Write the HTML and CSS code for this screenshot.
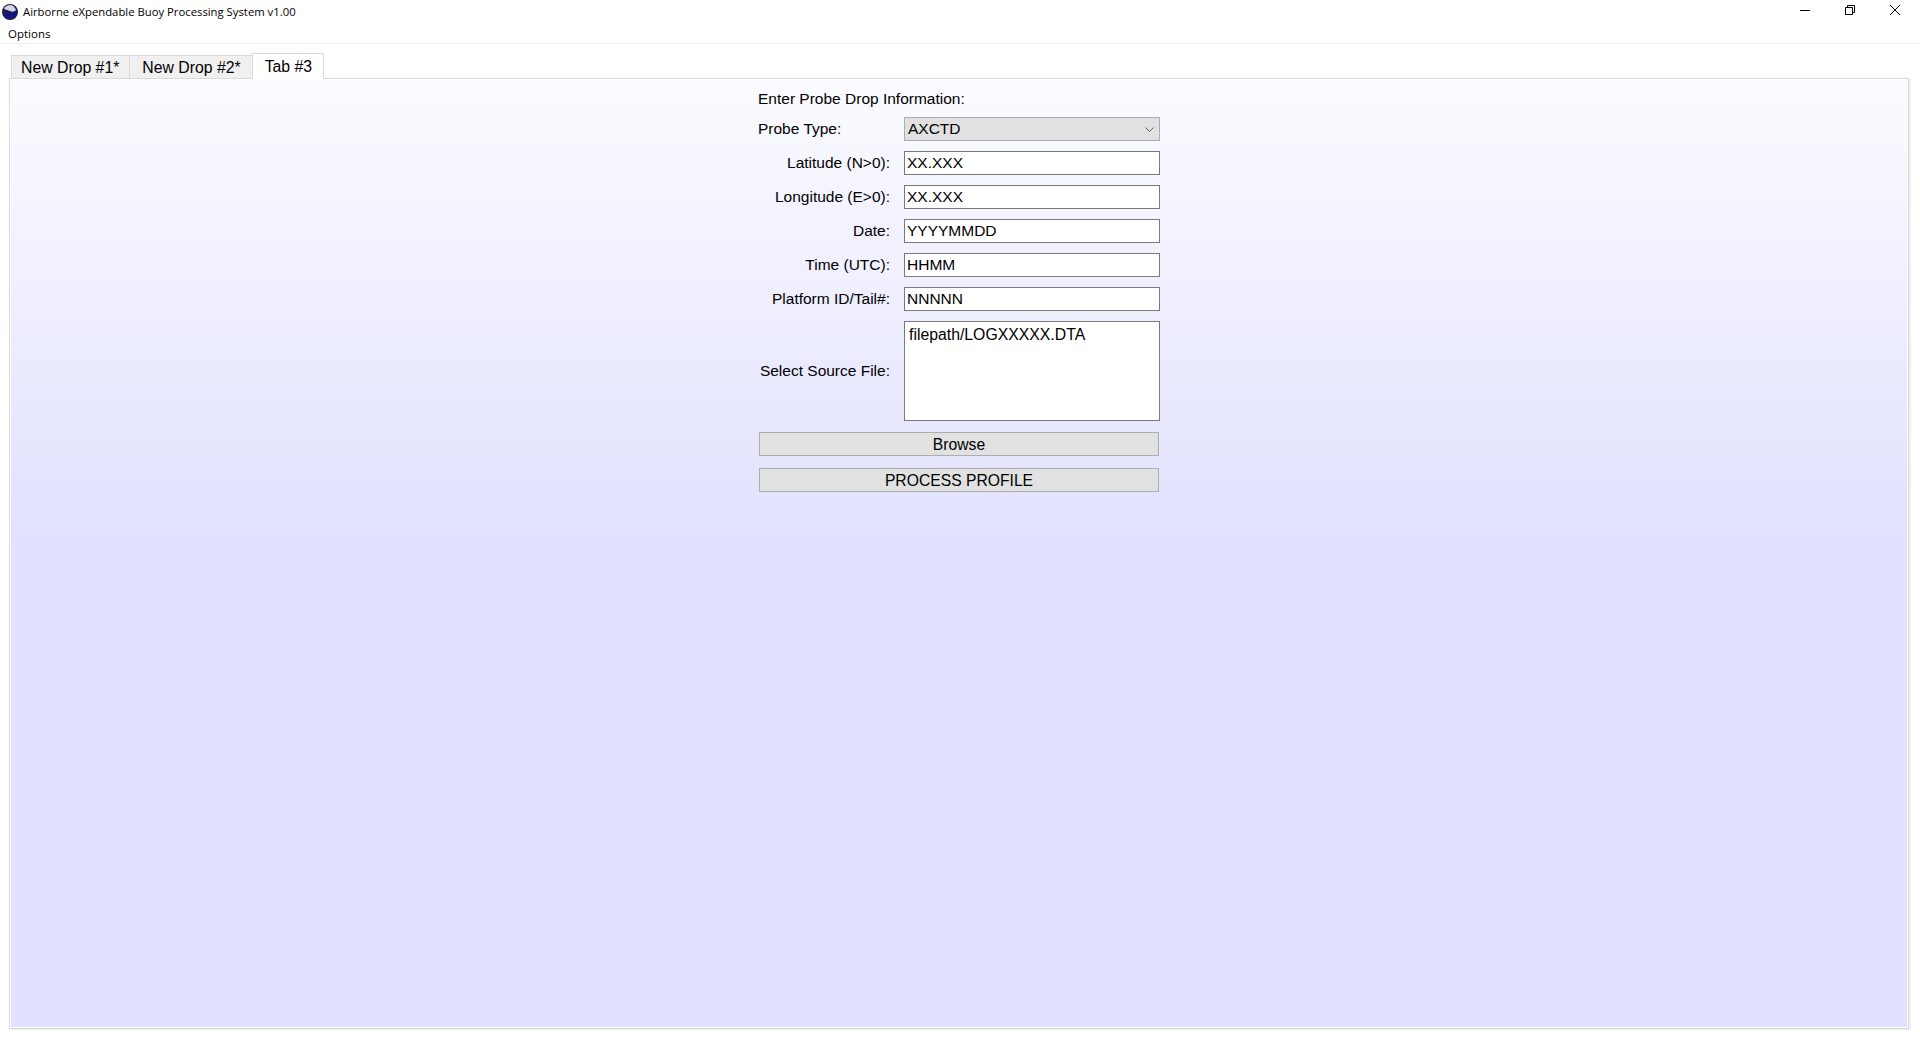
FILE: index.html
```html
<!DOCTYPE html>
<html lang="en">
<head>
    <meta charset="UTF-8">
    <title>Airborne eXpendable Buoy Processing System v1.00</title>
    <link rel="stylesheet" href="styles.css">
</head>
<body>
    <!-- window title bar -->
    <div class="titlebar">
        <svg class="app-icon" width="16" height="16" viewBox="0 0 16 16">
            <circle cx="8" cy="8" r="8" fill="#1c1c4e"/>
            <path d="M2 5 C3 2 6 1 8 1 C11 1 13 3 14 6 C12 8 10 8 8 7 C6 6 4 6 2 5 Z" fill="#d8d4e4"/>
            <path d="M3 10 C6 8 10 10 15 7 C15 11 12 14 8 14 C5 14 3 12 3 10 Z" fill="#14148c"/>
        </svg>
        <span class="title-text">Airborne eXpendable Buoy Processing System v1.00</span>
        <div class="window-buttons">
            <svg width="10" height="10" viewBox="0 0 10 10"><path d="M0 5.5 H10" stroke="#000" fill="none"/></svg>
            <svg width="10" height="10" viewBox="0 0 10 10"><path d="M0.5 2.5 H7.5 V9.5 H0.5 Z M2.5 2.5 V0.5 H9.5 V7.5 H7.5" stroke="#000" fill="none"/></svg>
            <svg width="10" height="10" viewBox="0 0 10 10"><path d="M0 0 L10 10 M10 0 L0 10" stroke="#000" fill="none"/></svg>
        </div>
    </div>

    <div class="menubar"><span>Options</span></div>

    <!-- tabs -->
    <div class="tabs">
        <div class="tab">New Drop #1*</div>
        <div class="tab">New Drop #2*</div>
        <div class="tab active">Tab #3</div>
    </div>

    <div class="pane">
        <div class="pane-fill">
            <div class="form">
                <div class="form-title">Enter Probe Drop Information:</div>
                <div class="row">
                    <label class="left">Probe Type:</label>
                    <div class="combo">
                        <span>AXCTD</span>
                        <svg width="9" height="5" viewBox="0 0 9 5"><path d="M0.5 0.5 L4.5 4.5 L8.5 0.5" stroke="#555" fill="none"/></svg>
                    </div>
                </div>
                <div class="row"><label>Latitude (N&gt;0):</label><div class="field">XX.XXX</div></div>
                <div class="row"><label>Longitude (E&gt;0):</label><div class="field">XX.XXX</div></div>
                <div class="row"><label>Date:</label><div class="field">YYYYMMDD</div></div>
                <div class="row"><label>Time (UTC):</label><div class="field">HHMM</div></div>
                <div class="row"><label>Platform ID/Tail#:</label><div class="field">NNNNN</div></div>
                <div class="row"><label>Select Source File:</label><div class="file-box">filepath/LOGXXXXX.DTA</div></div>
                <button class="btn btn-browse">Browse</button>
                <button class="btn">PROCESS PROFILE</button>
            </div>
        </div>
    </div>
</body>
</html>
```

FILE: styles.css
```css
html, body {
    margin: 0;
    height: 100%;
}

body {
    background: #fff;
    font-family: "Liberation Sans", Arial, sans-serif;
    font-size: 15.5px;
    color: #000;
    display: flex;
    flex-direction: column;
    overflow: hidden;
}

.titlebar {
    height: 22px;
    display: flex;
    align-items: center;
    padding-left: 2px;
    flex: none;
}

.app-icon {
    margin-right: 5px;
    margin-top: 1px;
}

.title-text {
    font-family: "Open Sans", "Noto Sans", sans-serif;
    font-size: 11.3px;
}

.window-buttons {
    margin-left: auto;
    margin-right: 20px;
    margin-top: -2px;
    display: flex;
    gap: 35px;
}

.menubar {
    height: 21px;
    padding-left: 8px;
    font-family: "Open Sans", "Noto Sans", sans-serif;
    font-size: 11.5px;
    line-height: 23px;
    border-bottom: 1px solid #f0f0f0;
    flex: none;
}

/* tabs */
.tabs {
    display: flex;
    align-items: flex-end;
    height: 34px;
    padding-left: 11px;
    flex: none;
    font-size: 15.8px;
}

.tab {
    height: 22px;
    line-height: 24px;
    padding: 0 11px 0 12px;
    background: #f0f0f0;
    border: 1px solid #d9d9d9;
    border-bottom: none;
    margin-left: -1px;
}

.tab:first-child {
    margin-left: 0;
    padding: 0 10px 0 9px;
}

.tab.active {
    height: 25px;
    line-height: 25px;
    padding: 0 11px 0 12px;
    background: #fff;
    margin-bottom: -1px;
    position: relative;
    z-index: 1;
}

.pane {
    flex: 1;
    display: flex;
    margin: 0 11px 9px 9px;
    border: 1px solid #d9d9d9;
    padding: 1px;
    background: #fff;
    box-shadow: 2px 1px 0 #f0f0f0;
}

.pane-fill {
    flex: 1;
    background: linear-gradient(to bottom, #fbfbff 0%, #e0e0ff 50%, #e0e0ff 100%);
    padding: 8px 0 0 747px;
}

/* form */
.form {
    width: 402px;
}

.form-title {
    height: 20px;
    line-height: 22px;
    margin-bottom: -1px;
}

.row {
    display: flex;
    justify-content: space-between;
    align-items: center;
    margin-top: 10px;
}

.row label {
    width: 132px;
    text-align: right;
    white-space: nowrap;
}

.row label.left {
    text-align: left;
}

.combo, .field, .file-box {
    box-sizing: border-box;
    width: 256px;
    border: 1px solid #7a7a7a;
    background: #fff;
}

.combo {
    height: 24px;
    padding: 0 5px 0 3px;
    background: #e1e1e1;
    border-color: #adadad;
    display: flex;
    justify-content: space-between;
    align-items: center;
}

.field {
    height: 24px;
    line-height: 22px;
    padding-left: 2px;
}

.file-box {
    height: 100px;
    line-height: 22px;
    padding: 2px 4px;
    font-size: 15.8px;
}

.btn {
    display: block;
    box-sizing: border-box;
    width: 400px;
    height: 24px;
    margin: 12px 0 0 1px;
    padding: 1px 0 0;
    background: #e1e1e1;
    border: 1px solid #adadad;
    font-family: inherit;
    font-size: 15.7px;
    color: #000;
}

.btn-browse {
    margin-top: 11px;
}
```
